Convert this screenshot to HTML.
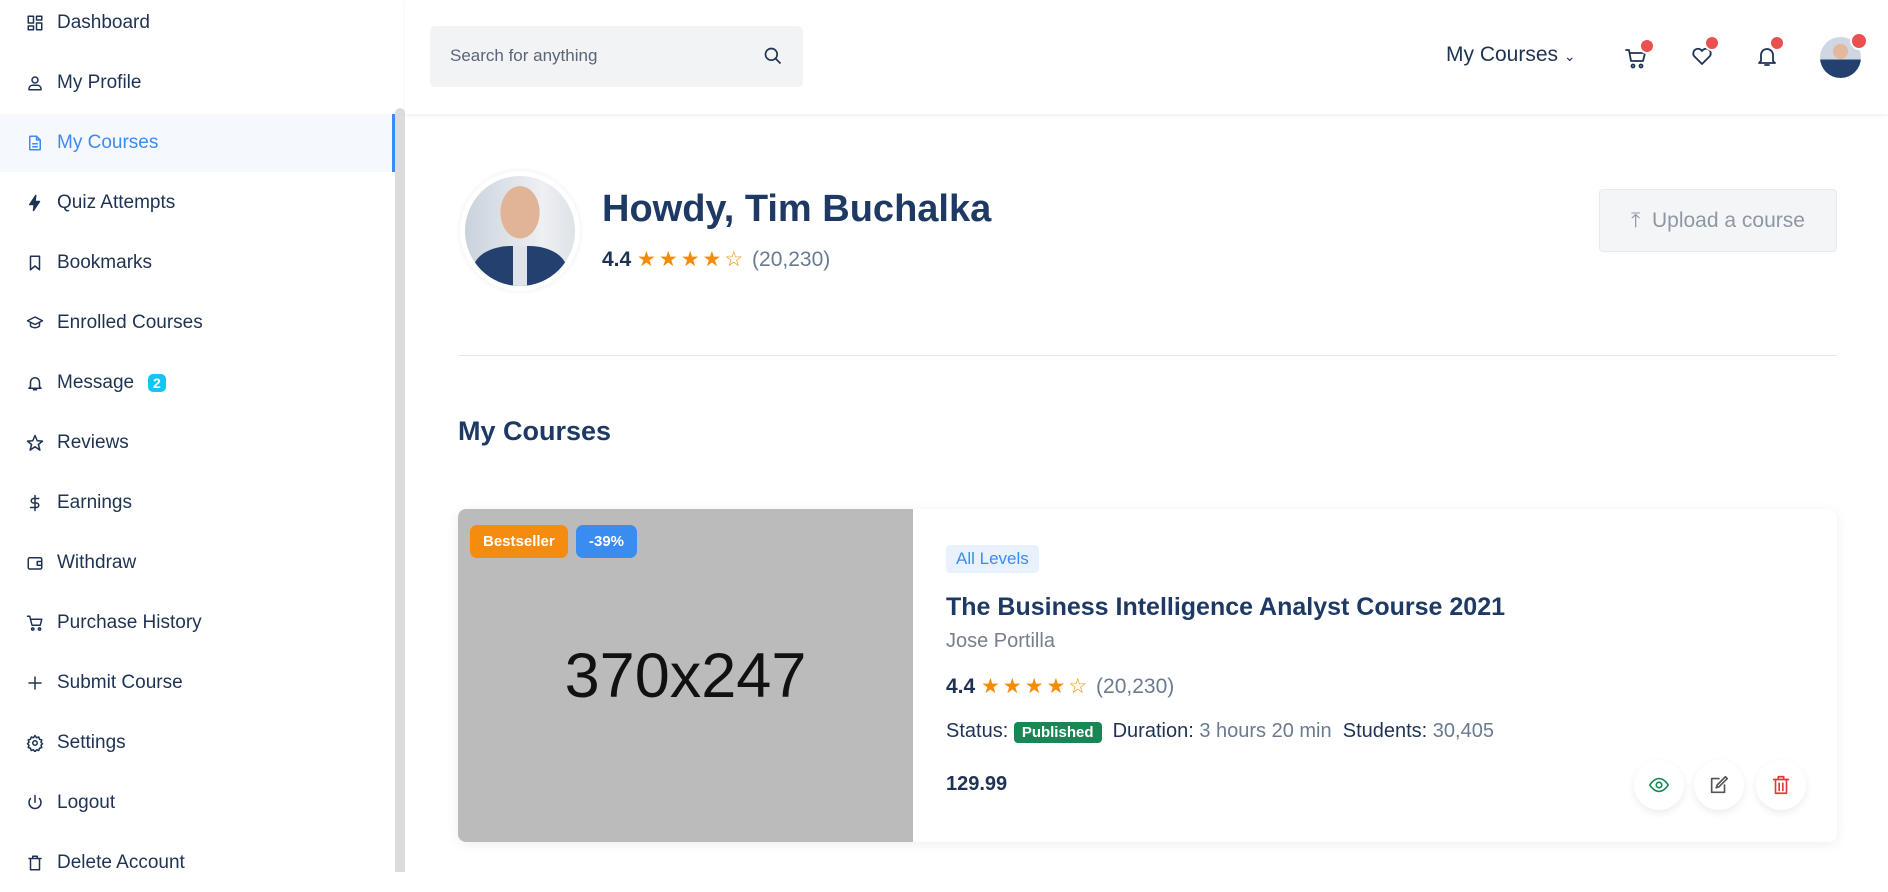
<!DOCTYPE html>
<html><head><meta charset="utf-8"><style>
*{box-sizing:border-box;margin:0;padding:0}
body{width:1888px;height:872px;overflow:hidden;background:#fff;font-family:"Liberation Sans",sans-serif;color:#1d3557;position:relative}
.side{position:absolute;left:0;top:0;width:395px;height:872px;background:#fff}
.item{position:absolute;left:0;width:395px;height:58px;display:flex;align-items:center;font-size:19px;color:#1e3353}
.item svg{position:absolute;left:26px;width:18px;height:18px;fill:none;stroke:#1e3353;stroke-width:2;stroke-linecap:round;stroke-linejoin:round}
.item span.t{position:absolute;left:57px}
.item.act{background:#f5f9fe;color:#3b8cf0;border-right:3px solid #3b8cf0}
.item.act svg{stroke:#3b8cf0}
.badge{position:absolute;left:148px;background:#14c6ee;color:#fff;font-size:14px;font-weight:bold;border-radius:5px;padding:1px 5px}
.scroll{position:absolute;left:395px;top:108px;width:10px;height:764px;background:#dcdcdf;border-radius:5px 5px 0 0}
.header{position:absolute;left:405px;top:0;width:1483px;height:114px;background:#fff;box-shadow:0 2px 4px rgba(0,0,0,.06)}
.search{position:absolute;left:430px;top:26px;width:373px;height:61px;background:#f1f3f5;border-radius:5px;font-size:17px;color:#5a6578;padding:20px 20px}
.hicon{position:absolute;width:24px;height:24px;fill:none;stroke:#1e3353;stroke-width:1.8;stroke-linecap:round;stroke-linejoin:round}
.dot{position:absolute;width:16px;height:16px;border-radius:50%;background:#e95050;border:2px solid #fff}
.stars{color:#f48c06;letter-spacing:3px;font-size:21px}
.card{position:absolute;left:458px;top:509px;width:1379px;height:333px;background:#fff;border-radius:8px;box-shadow:0 2px 12px rgba(0,0,0,.07);overflow:hidden}
.img{position:absolute;left:0;top:0;width:455px;height:333px;background:#bbbbbb;display:flex;align-items:center;justify-content:center;font-size:63px;color:#111}
.lb{position:absolute;top:16px;height:33px;border-radius:7px;color:#fff;font-size:15px;font-weight:bold;display:flex;align-items:center;padding:0 13px}
.act-b{position:absolute;top:760px;width:50px;height:50px;border-radius:50%;background:#fff;box-shadow:0 3px 8px rgba(0,0,0,.08);display:flex;align-items:center;justify-content:center}
.act-b svg{width:22px;height:22px;fill:none;stroke-width:1.8;stroke-linecap:round;stroke-linejoin:round}
</style></head><body>
<div class="side">
<div class="item" style="top:-6px"><svg viewBox="0 0 24 24"><rect x="3" y="3" width="7" height="9"/><rect x="14" y="3" width="7" height="5"/><rect x="14" y="12" width="7" height="9"/><rect x="3" y="16" width="7" height="5"/></svg><span class="t">Dashboard</span></div>
<div class="item" style="top:54px"><svg viewBox="0 0 24 24"><circle cx="12" cy="8" r="4"/><path d="M4 21v-2a5 5 0 0 1 5-4h6a5 5 0 0 1 5 4v2z"/></svg><span class="t">My Profile</span></div>
<div class="item act" style="top:114px"><svg viewBox="0 0 24 24"><path d="M14 3H6a1 1 0 0 0-1 1v16a1 1 0 0 0 1 1h12a1 1 0 0 0 1-1V8z"/><path d="M14 3v5h5M9 13h6M9 17h6"/></svg><span class="t">My Courses</span></div>
<div class="item" style="top:174px"><svg viewBox="0 0 24 24" style="fill:#1e3353"><path d="M13 2L5 14h6l-1 8 8-12h-6z"/></svg><span class="t">Quiz Attempts</span></div>
<div class="item" style="top:234px"><svg viewBox="0 0 24 24"><path d="M6 3h12v18l-6-5-6 5z"/></svg><span class="t">Bookmarks</span></div>
<div class="item" style="top:294px"><svg viewBox="0 0 24 24"><path d="M2 9l10-5 10 5-10 5z"/><path d="M6 11v5c3 3 9 3 12 0v-5"/></svg><span class="t">Enrolled Courses</span></div>
<div class="item" style="top:354px"><svg viewBox="0 0 24 24"><path d="M6 17V11a6 6 0 0 1 12 0v6l2 2H4z"/><path d="M10 21h4"/></svg><span class="t">Message</span><span class="badge">2</span></div>
<div class="item" style="top:414px"><svg viewBox="0 0 24 24"><path d="M12 2l3 7 7 .5-5.5 4.5 2 7.5L12 17l-6.5 4.5 2-7.5L2 9.5 9 9z"/></svg><span class="t">Reviews</span></div>
<div class="item" style="top:474px"><svg viewBox="0 0 24 24"><path d="M12 2v20M17 6H10a3 3 0 0 0 0 6h4a3 3 0 0 1 0 6H6"/></svg><span class="t">Earnings</span></div>
<div class="item" style="top:534px"><svg viewBox="0 0 24 24"><rect x="3" y="5" width="18" height="15" rx="2"/><path d="M21 10h-6v5h6"/></svg><span class="t">Withdraw</span></div>
<div class="item" style="top:594px"><svg viewBox="0 0 24 24"><path d="M2 3h3l3 12h11l2-8H6"/><circle cx="9" cy="20" r="1.5"/><circle cx="18" cy="20" r="1.5"/></svg><span class="t">Purchase History</span></div>
<div class="item" style="top:654px"><svg viewBox="0 0 24 24"><path d="M12 4v16M4 12h16"/></svg><span class="t">Submit Course</span></div>
<div class="item" style="top:714px"><svg viewBox="0 0 24 24"><circle cx="12" cy="12" r="3"/><path d="M12 2l2 3 3-1 1 3 3 1-1 3 2 2-2 2 1 3-3 1-1 3-3-1-2 3-2-3-3 1-1-3-3-1 1-3-2-2 2-2-1-3 3-1 1-3 3 1z"/></svg><span class="t">Settings</span></div>
<div class="item" style="top:774px"><svg viewBox="0 0 24 24"><path d="M12 2v9M6 6a8 8 0 1 0 12 0"/></svg><span class="t">Logout</span></div>
<div class="item" style="top:834px"><svg viewBox="0 0 24 24"><path d="M4 6h16M9 6V3h6v3M6 6v15h12V6"/></svg><span class="t">Delete Account</span></div>
</div>
<div class="scroll"></div>
<div class="header"></div>
<div class="search">Search for anything
<svg style="position:absolute;right:20px;top:20px;width:20px;height:20px;fill:none;stroke:#1e3353;stroke-width:2" viewBox="0 0 24 24"><circle cx="10" cy="10" r="7"/><path d="M15 15l6 6"/></svg></div>
<div style="position:absolute;left:1446px;top:43px;font-size:21px;color:#1e3353">My Courses <span style="font-size:14px">&#8964;</span></div>
<svg class="hicon" style="left:1624px;top:46px" viewBox="0 0 24 24"><path d="M2 4h3l2 11h12l2-8H6"/><circle cx="9" cy="20" r="1.5"/><circle cx="17" cy="20" r="1.5"/></svg><div class="dot" style="left:1639px;top:38px"></div>
<svg class="hicon" style="left:1690px;top:44px" viewBox="0 0 24 24"><path d="M12 20l-8-8a4.5 4.5 0 0 1 8-5 4.5 4.5 0 0 1 8 5z"/></svg><div class="dot" style="left:1704px;top:35px"></div>
<svg class="hicon" style="left:1755px;top:44px" viewBox="0 0 24 24"><path d="M6 17V11a6 6 0 0 1 12 0v6l2 2H4z"/><path d="M10 21h4"/></svg><div class="dot" style="left:1769px;top:35px"></div>
<div style="position:absolute;left:1820px;top:37px;width:41px;height:41px;border-radius:50%;background:radial-gradient(circle at 50% 35%,#e3b89b 0 22%,transparent 23%),linear-gradient(#cfd8e2 0 55%,#24406e 55%)"></div><div class="dot" style="left:1850px;top:32px;width:18px;height:18px"></div>

<div style="position:absolute;left:460px;top:171px;width:120px;height:120px;border-radius:50%;background:#fff;box-shadow:0 0 6px rgba(0,0,0,.08)"></div>
<div style="position:absolute;left:465px;top:176px;width:110px;height:110px;border-radius:50%;background:radial-gradient(ellipse 18% 24% at 50% 33%,#e2b497 98%,transparent 100%),linear-gradient(90deg,#c9d2dc,#eef0f2 70%,#dde3e8);overflow:hidden"><div style="position:absolute;left:8px;top:70px;width:94px;height:60px;border-radius:40% 40% 0 0;background:#24406e"></div><div style="position:absolute;left:48px;top:70px;width:14px;height:40px;background:#dfe3ea"></div></div>
<div style="position:absolute;left:602px;top:188px;font-size:38px;font-weight:bold;color:#1e3a64">Howdy, Tim Buchalka</div>
<div style="position:absolute;left:602px;top:247px;font-size:21px"><b style="font-weight:600;color:#1e3353">4.4</b> <span class="stars">★★★★☆</span> <span style="color:#6b7a90">(20,230)</span></div>
<div style="position:absolute;left:1599px;top:189px;width:238px;height:63px;border:1px solid #e8ebee;background:#f4f5f7;border-radius:4px;color:#8e97a4;font-size:21px;display:flex;align-items:center;justify-content:center">⤒&nbsp; Upload a course</div>
<div style="position:absolute;left:458px;top:355px;width:1379px;height:1px;background:#e5e7eb"></div>
<div style="position:absolute;left:458px;top:416px;font-size:27px;font-weight:bold;color:#1e3a64">My Courses</div>

<div class="card">
<div class="img">370x247</div>
<div class="lb" style="left:12px;background:#f68c0f">Bestseller</div>
<div class="lb" style="left:118px;background:#3b8cf0">-39%</div>
<div style="position:absolute;left:488px;top:36px;background:#e8f1fd;color:#3b8cf0;font-size:17px;padding:4px 10px;border-radius:4px">All Levels</div>
<div style="position:absolute;left:488px;top:84px;font-size:25px;font-weight:bold;color:#1e3a64">The Business Intelligence Analyst Course 2021</div>
<div style="position:absolute;left:488px;top:121px;font-size:20px;color:#777f8b">Jose Portilla</div>
<div style="position:absolute;left:488px;top:165px;font-size:21px"><b style="font-weight:600;color:#1e3353">4.4</b> <span class="stars">★★★★☆</span> <span style="color:#6b7a90">(20,230)</span></div>
<div style="position:absolute;left:488px;top:211px;font-size:20px;color:#1e3353">Status: <span style="background:#198754;color:#fff;font-size:15px;font-weight:bold;padding:2px 8px;border-radius:4px">Published</span> &nbsp;Duration: <span style="color:#6b7a90">3 hours 20 min</span> &nbsp;Students: <span style="color:#6b7a90">30,405</span></div>
<div style="position:absolute;left:488px;top:264px;font-size:20px;font-weight:bold;color:#1e3353">129.99</div>
</div>
<div class="act-b" style="left:1634px"><svg viewBox="0 0 24 24" style="stroke:#198754"><path d="M2 12s4-7 10-7 10 7 10 7-4 7-10 7S2 12 2 12z"/><circle cx="12" cy="12" r="3"/></svg></div>
<div class="act-b" style="left:1694px"><svg viewBox="0 0 24 24" style="stroke:#555"><path d="M4 5h8M4 5v15h14v-8"/><path d="M19 3l2 2-9 9-3 1 1-3z"/></svg></div>
<div class="act-b" style="left:1756px"><svg viewBox="0 0 24 24" style="stroke:#e03a3a"><path d="M4 6h16M9 6V3h6v3M6 6v15h12V6M10 10v8M14 10v8"/></svg></div>
</body></html>
